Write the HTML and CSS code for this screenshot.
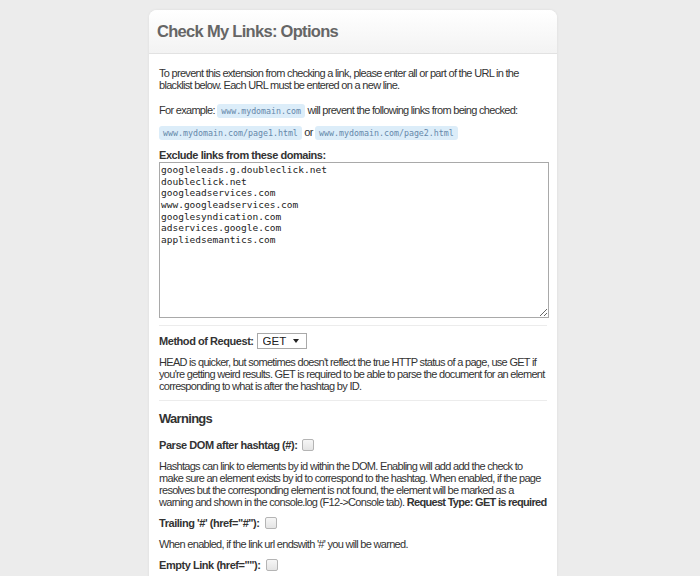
FILE: index.html
```html
<!DOCTYPE html>
<html lang="en">
<head>
    <meta charset="UTF-8">
    <title>Check My Links: Options</title>
    <link rel="stylesheet" href="styles.css">
</head>
<body>
    <div class="page">
        <div class="header">
            <h1>Check My Links: Options</h1>
        </div>
        <div class="content">
            <p class="intro">To prevent this extension from checking a link, please enter all or part of the URL in the blacklist below. Each URL must be entered on a new line.</p>
            <p class="example">For example: <code>www.mydomain.com</code> will prevent the following links from being checked:</p>
            <p class="example2"><code>www.mydomain.com/page1.html</code> or <code>www.mydomain.com/page2.html</code></p>

            <label class="field-label" for="blacklist">Exclude links from these domains:</label>
            <textarea id="blacklist">googleleads.g.doubleclick.net
doubleclick.net
googleadservices.com
www.googleadservices.com
googlesyndication.com
adservices.google.com
appliedsemantics.com</textarea>

            <hr class="sep-1">

            <div class="row">
                <label for="method">Method of Request:</label>
                <span class="select-wrap">
                    <select id="method">
                        <option>GET</option>
                        <option>HEAD</option>
                    </select>
                </span>
            </div>
            <p>HEAD is quicker, but sometimes doesn't reflect the true HTTP status of a page, use GET if you're getting weird results. GET is required to be able to parse the document for an element corresponding to what is after the hashtag by ID.</p>

            <hr class="sep-2">

            <h2>Warnings</h2>

            <div class="row">
                <label for="hash">Parse DOM after hashtag (#):</label>
                <input type="checkbox" id="hash">
            </div>
            <p>Hashtags can link to elements by id within the DOM. Enabling will add add the check to make sure an element exists by id to correspond to the hashtag. When enabled, if the page resolves but the corresponding element is not found, the element will be marked as a warning and shown in the console.log (F12-&gt;Console tab). <b>Request Type: GET is required</b></p>

            <div class="row">
                <label for="trailing">Trailing '#' (href="#"):</label>
                <input type="checkbox" id="trailing">
            </div>
            <p>When enabled, if the link url endswith '#' you will be warned.</p>

            <div class="row">
                <label for="empty">Empty Link (href=""):</label>
                <input type="checkbox" id="empty">
            </div>
            <p>When enabled, links with an empty href will be warned.</p>
        </div>
    </div>
</body>
</html>
```

FILE: styles.css
```css
* { margin: 0; padding: 0; box-sizing: border-box; }
body { font-family: "Liberation Sans", Arial, sans-serif; font-size: 11px; letter-spacing: -0.7px; background: #ececec; color: #333; padding: 10px 0 0 6px; line-height: 12px; }
.page { width: 408px; margin: 0 auto; background: #fff; border-radius: 8px 8px 0 0; box-shadow: 0 0 3px rgba(0, 0, 0, 0.07); }
.header { height: 44px; padding: 11px 8px 0; background: linear-gradient(#fff, #f3f3f3); border-bottom: 1px solid #e2e2e2; border-radius: 8px 8px 0 0; }
h1 { font-size: 16.5px; line-height: 20px; letter-spacing: -0.7px; color: #666; }
.content { padding: 13px 10px 10px; }
p { margin-bottom: 7px; }
.intro { margin-bottom: 13px; }
.example { margin-bottom: 8px; }
.example2 { margin-bottom: 9px; }
code { display: inline-block; vertical-align: middle; font-family: "DejaVu Sans Mono", monospace; font-size: 8.3px; line-height: 10px; letter-spacing: 0; color: #6688aa; background: #dcedf9; border-radius: 3px; padding: 2px 4px; }
.field-label { display: block; font-weight: bold; letter-spacing: -0.45px; margin-bottom: 1px; }
textarea { display: block; width: 390px; height: 156px; border: 1px solid #a9a9a9; padding: 1px; font-family: "DejaVu Sans Mono", monospace; font-size: 9.5px; line-height: 11.6px; letter-spacing: 0; color: #222; resize: vertical; outline: none; }
hr { border: none; border-top: 1px solid #ececec; }
.sep-1 { margin: 7px 0 7px; }
.sep-2 { margin: 8px 0 10px; }
.row { display: flex; align-items: center; gap: 3px; height: 16px; margin-bottom: 7px; }
.row label { font-weight: bold; letter-spacing: -0.45px; }
.select-wrap { position: relative; display: inline-block; }
.select-wrap::after { content: ""; position: absolute; right: 8px; top: 6px; border-left: 3px solid transparent; border-right: 3px solid transparent; border-top: 4px solid #222; pointer-events: none; }
select { appearance: none; -webkit-appearance: none; display: block; width: 50px; height: 16px; padding: 0 0 0 5px; font-family: "Liberation Sans", Arial, sans-serif; font-size: 11.5px; letter-spacing: 0; color: #222; border: 1px solid #a9a9a9; border-radius: 0; background: #fff; }
input[type="checkbox"] { appearance: none; -webkit-appearance: none; width: 12px; height: 12px; margin-left: 2px; border: 1px solid #b4b4b4; border-radius: 2px; background: linear-gradient(#f6f6f6, #e4e4e4); }
h2 { font-size: 13px; line-height: 16px; margin-bottom: 10px; }
```
